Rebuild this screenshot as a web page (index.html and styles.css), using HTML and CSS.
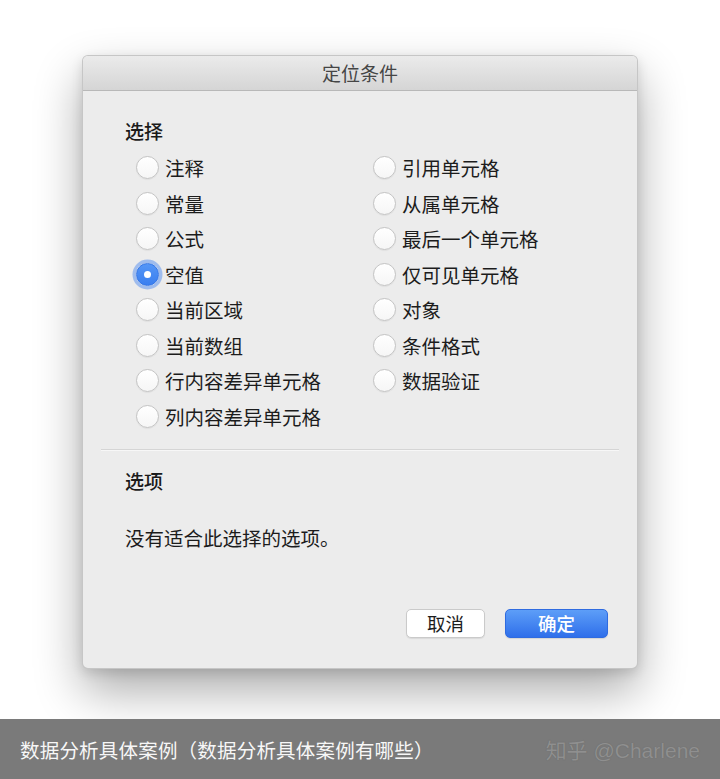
FILE: index.html
```html
<!DOCTYPE html>
<html lang="zh-CN">
<head>
<meta charset="utf-8">
<title>定位条件</title>
<link rel="stylesheet" href="styles.css">
</head>
<body>
<div class="stage">
  <div class="dialog">
    <div class="titlebar">定位条件</div>
    <div class="body">
      <div class="select-section">
        <div class="heading">选择</div>
        <div class="radio-grid">
          <label class="radio-row"><span class="radio"></span>注释</label>
          <label class="radio-row"><span class="radio"></span>常量</label>
          <label class="radio-row"><span class="radio"></span>公式</label>
          <label class="radio-row"><span class="radio checked"></span>空值</label>
          <label class="radio-row"><span class="radio"></span>当前区域</label>
          <label class="radio-row"><span class="radio"></span>当前数组</label>
          <label class="radio-row"><span class="radio"></span>行内容差异单元格</label>
          <label class="radio-row"><span class="radio"></span>列内容差异单元格</label>
          <label class="radio-row"><span class="radio"></span>引用单元格</label>
          <label class="radio-row"><span class="radio"></span>从属单元格</label>
          <label class="radio-row"><span class="radio"></span>最后一个单元格</label>
          <label class="radio-row"><span class="radio"></span>仅可见单元格</label>
          <label class="radio-row"><span class="radio"></span>对象</label>
          <label class="radio-row"><span class="radio"></span>条件格式</label>
          <label class="radio-row"><span class="radio"></span>数据验证</label>
        </div>
      </div>
      <div class="separator"></div>
      <div class="options-section">
        <div class="heading">选项</div>
        <div class="note">没有适合此选择的选项。</div>
      </div>
      <div class="footer">
        <button class="btn btn-cancel">取消</button>
        <button class="btn btn-ok">确定</button>
      </div>
    </div>
  </div>
</div>
<div class="caption">
  <span class="caption-text">数据分析具体案例（数据分析具体案例有哪些）</span>
  <span class="watermark">知乎 @Charlene</span>
</div>
</body>
</html>
```

FILE: styles.css
```css
* { box-sizing: border-box; }

html, body {
  margin: 0;
  padding: 0;
  background: #ffffff;
  font-family: "Noto Sans CJK SC", "Noto Sans", sans-serif;
  color: #1f1f1f;
}

.stage {
  height: 719px;
  padding: 55px 0 0 82px;
  background: #ffffff;
  overflow: hidden;
}

.dialog {
  width: 556px;
  height: 614px;
  display: flex;
  flex-direction: column;
  background: #ececec;
  border: 1px solid rgba(0, 0, 0, 0.16);
  border-radius: 6px;
  box-shadow: 0 22px 48px rgba(0, 0, 0, 0.33), 0 4px 12px rgba(0, 0, 0, 0.12);
  overflow: hidden;
}

.titlebar {
  height: 35px;
  flex: none;
  text-align: center;
  line-height: 34px;
  font-size: 19px;
  color: #454545;
  background: linear-gradient(#ebebeb, #d5d5d5);
  border-bottom: 1px solid #b8b8b8;
}

.body {
  flex: 1;
  display: flex;
  flex-direction: column;
}

.select-section {
  padding: 21px 0 0 42px;
}

.heading {
  font-size: 19px;
  font-weight: 500;
  line-height: 38px;
  color: #1a1a1a;
}

.radio-grid {
  display: grid;
  grid-template-columns: 237px auto;
  grid-template-rows: repeat(8, 35.5px);
  grid-auto-flow: column;
  padding-left: 11px;
}

.radio-row {
  display: flex;
  align-items: center;
  gap: 6px;
  font-size: 19.5px;
  color: #1c1c1c;
  white-space: nowrap;
}

.radio {
  width: 23px;
  height: 23px;
  flex: none;
  border-radius: 50%;
  border: 1px solid #c4c4c4;
  background: linear-gradient(#ffffff, #f6f6f6);
  box-shadow: 0 0.5px 1px rgba(0, 0, 0, 0.08);
  display: flex;
  align-items: center;
  justify-content: center;
}

.radio.checked {
  border: 1px solid #3476e8;
  background: linear-gradient(#5596f6, #3a7ff0);
  box-shadow: 0 0 0 3.5px rgba(96, 150, 238, 0.55);
}

.radio.checked::after {
  content: "";
  width: 7px;
  height: 7px;
  border-radius: 50%;
  background: #ffffff;
}

.separator {
  height: 1px;
  margin: 15px 18px 0 18px;
  background: #d5d5d5;
  box-shadow: 0 1px 0 rgba(255, 255, 255, 0.6);
}

.options-section {
  padding: 12px 0 0 42px;
}

.note {
  margin-top: 20px;
  font-size: 19.5px;
  line-height: 36px;
  color: #1c1c1c;
}

.footer {
  margin-top: auto;
  display: flex;
  justify-content: flex-end;
  gap: 20px;
  padding: 0 29px 30px 0;
}

.btn {
  height: 29px;
  border-radius: 5px;
  font-family: "Noto Sans CJK SC", "Noto Sans", sans-serif;
  font-size: 18.5px;
  line-height: 27px;
  padding: 0;
  cursor: default;
}

.btn-cancel {
  width: 79px;
  background: #ffffff;
  color: #1c1c1c;
  border: 1px solid #cacaca;
  box-shadow: 0 1px 1px rgba(0, 0, 0, 0.08);
}

.btn-ok {
  width: 103px;
  color: #ffffff;
  font-weight: 500;
  background: linear-gradient(#5d9ef8, #2f6fea);
  border: 1px solid #2f6be0;
  box-shadow: 0 1px 1px rgba(0, 0, 0, 0.1);
}

.caption {
  height: 60px;
  background: #7a7a7a;
  display: flex;
  align-items: center;
  justify-content: space-between;
  padding: 0 20px 0 20px;
}

.caption-text {
  font-size: 19.5px;
  color: #f7f7f7;
  letter-spacing: 0.2px;
}

.watermark {
  font-family: "Liberation Sans", "Noto Sans CJK SC", sans-serif;
  font-size: 21px;
  color: #8f8f8f;
  text-shadow: 0 0 1px rgba(0, 0, 0, 0.35), 0 0 1px rgba(255, 255, 255, 0.2);
}
```
